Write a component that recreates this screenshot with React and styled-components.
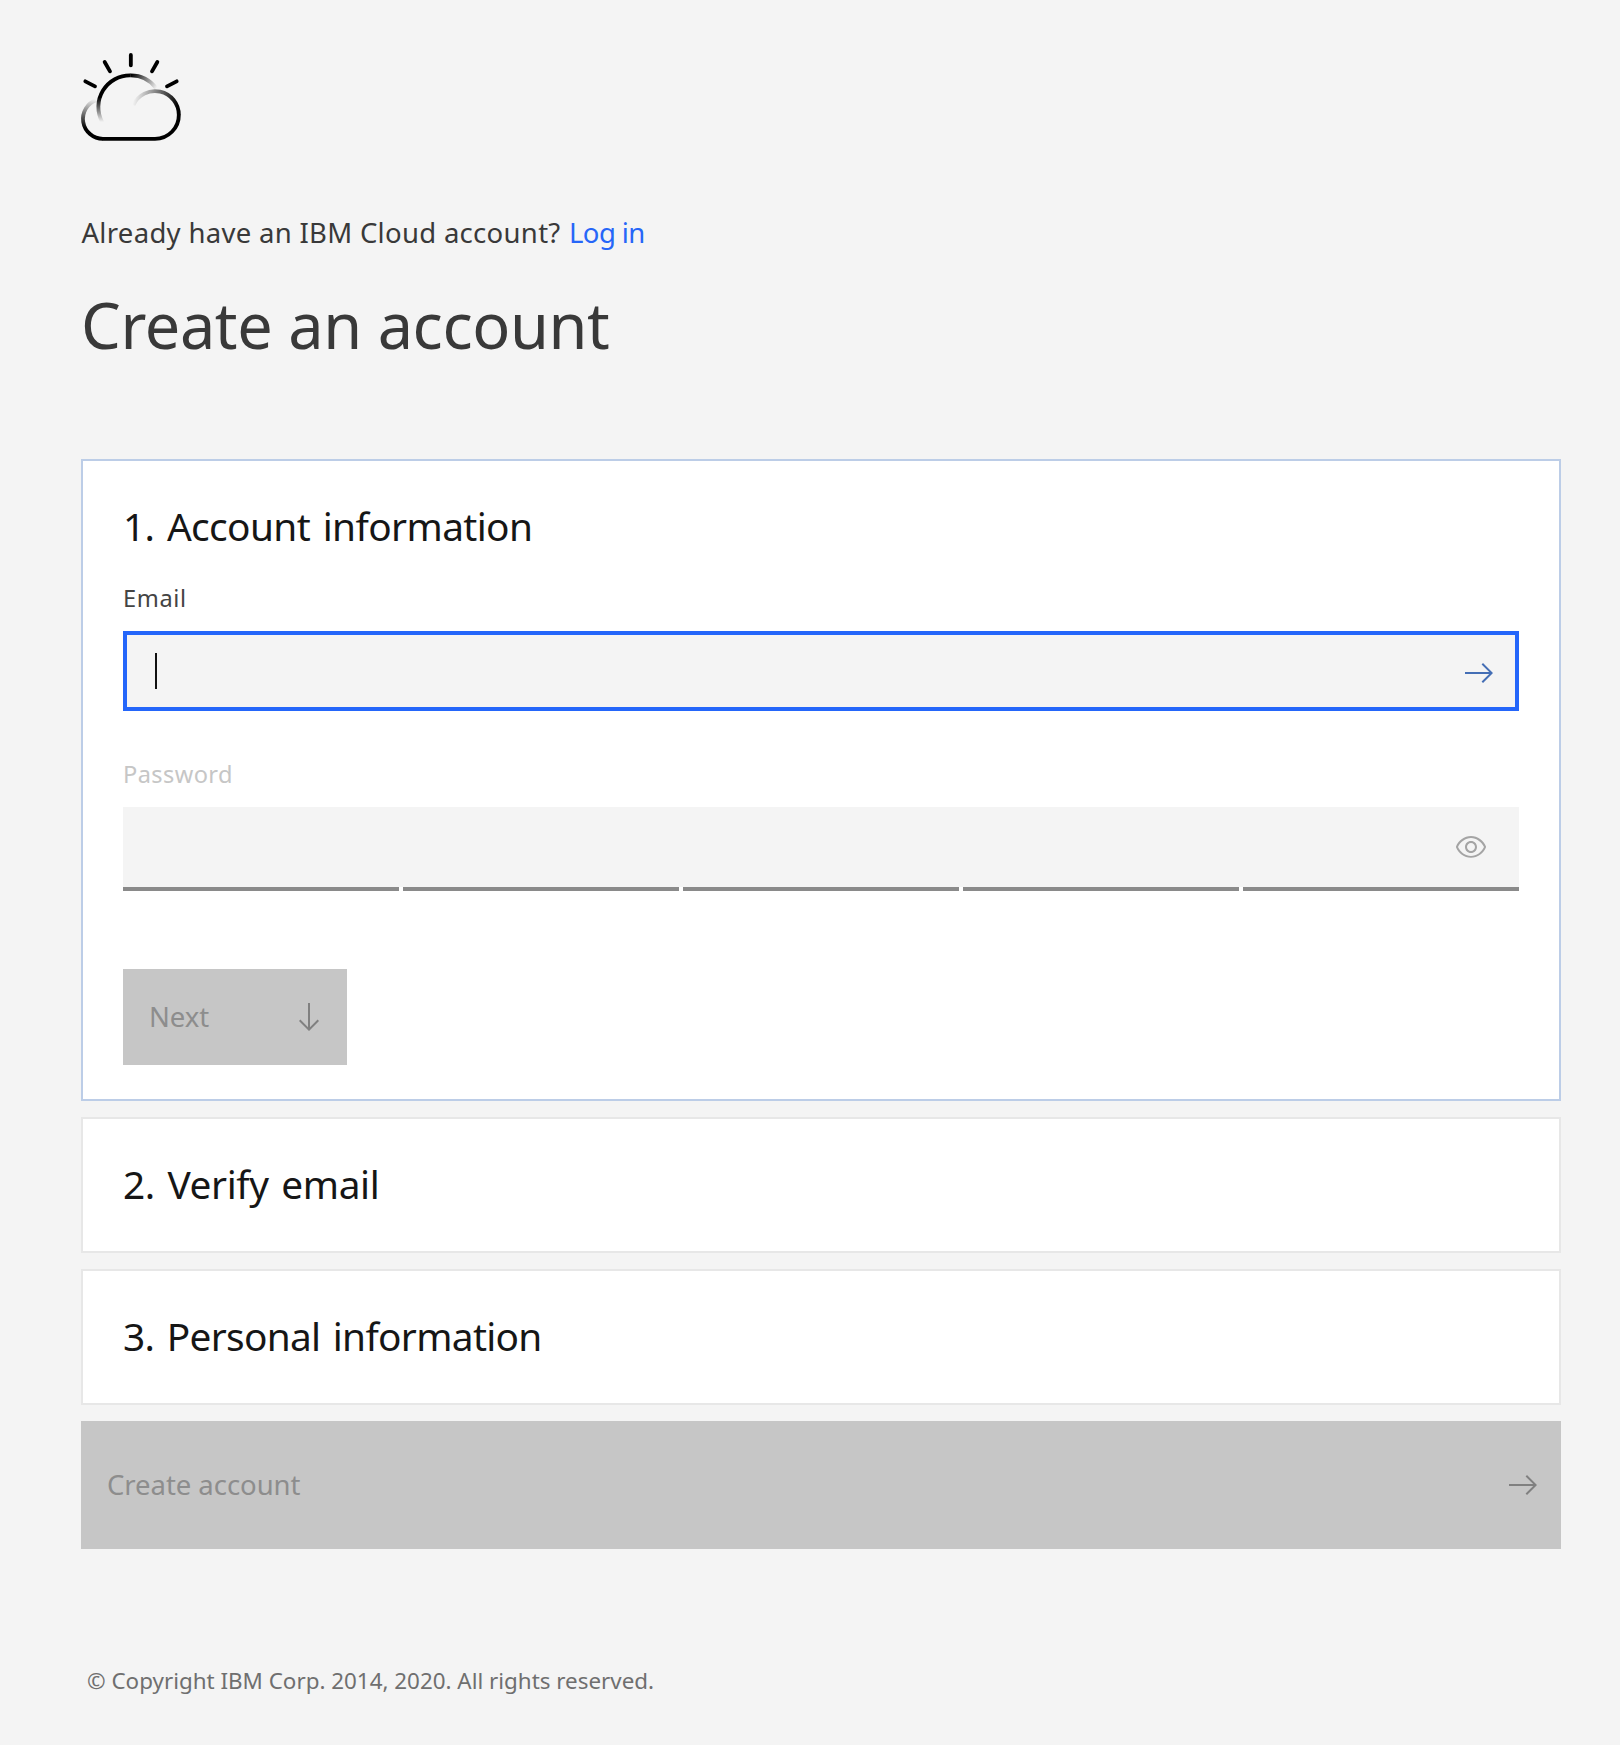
import React from "react";
import styled, { createGlobalStyle } from "styled-components";

const GlobalStyle = createGlobalStyle`
  *, *::before, *::after { box-sizing: border-box; }
  body {
    margin: 0;
    background: #f4f4f4;
    color: #161616;
    font-family: "Noto Sans", "Open Sans", sans-serif;
  }
`;

const Page = styled.main`
  width: 1620px;
  min-height: 1745px;
  padding: 52px 59px 48px 81px;
  display: flex;
  flex-direction: column;
  background: #f4f4f4;
`;

const Logo = styled.svg`
  display: block;
  flex: none;
  width: 100px;
  height: 90px;
  overflow: visible;
`;

const Intro = styled.p`
  margin: 73px 0 0 0.5px;
  font-size: 27.5px;
  line-height: 36px;
  letter-spacing: 0.3px;
  color: #393939;
`;

const LoginLink = styled.a`
  margin-left: 1px;
  color: #2666f8;
  letter-spacing: -0.6px;
  text-decoration: none;
`;

const Title = styled.h1`
  margin: 36px 0 0;
  font-size: 63px;
  font-weight: 400;
  line-height: 76px;
  letter-spacing: -0.41px;
  color: #393939;
`;

const Steps = styled.div`
  margin-top: 96px;
  display: flex;
  flex-direction: column;
  gap: 16px;
`;

const Card = styled.section`
  display: flex;
  flex-direction: column;
  align-items: stretch;
  min-height: 136px;
  padding: 39px 40px 34px;
  border: 2px solid ${(p) => (p.$active ? "#bccde7" : "#e7e7e7")};
  background: #fff;
`;

const StepHeading = styled.h2`
  margin: 0;
  font-size: 38.8px;
  font-weight: 400;
  line-height: 52px;
  word-spacing: 3px;
  letter-spacing: ${(p) => p.$tracking}px;
`;

const Label = styled.label`
  margin-top: ${(p) => p.$gap}px;
  margin-bottom: 17px;
  font-size: 23.6px;
  line-height: 32px;
  letter-spacing: ${(p) => p.$tracking}px;
  color: ${(p) => (p.$disabled ? "#c6c6c6" : "#444")};
`;

const Field = styled.div`
  height: 80px;
  display: flex;
  align-items: center;
  justify-content: ${(p) => (p.$focused ? "space-between" : "flex-end")};
  padding: ${(p) => (p.$focused ? "0 20px 0 28px" : "0 32px")};
  border: ${(p) => (p.$focused ? "4px solid #2466fa" : "0")};
  background: #f4f4f4;
`;

const Caret = styled.span`
  width: 2px;
  height: 36px;
  background: #111;
`;

const Icon = styled.svg`
  display: block;
  flex: none;
  width: 32px;
  height: 32px;
  margin-top: ${(p) => p.$drop || 0}px;
  fill: ${(p) => p.$color};
`;

const StrengthMeter = styled.div`
  display: grid;
  grid-template-columns: repeat(5, 1fr);
  gap: 4px;
`;

const StrengthBar = styled.span`
  height: 4px;
  background: #8a8a8a;
`;

const Button = styled.button`
  display: flex;
  align-items: center;
  justify-content: space-between;
  width: ${(p) => p.$width};
  height: ${(p) => p.$height}px;
  margin: ${(p) => p.$top}px 0 0;
  padding: 0 22px 0 26px;
  border: 0;
  background: #c6c6c6;
  color: #8d8d8d;
  font-family: inherit;
  font-size: 27.5px;
  line-height: 36px;
  letter-spacing: -0.05px;
`;

const Footer = styled.footer`
  margin: 116px 0 0 6px;
  font-size: 22.4px;
  line-height: 32px;
  color: #6f6f6f;
`;

function CloudLogo() {
  return (
    <Logo viewBox="33 36 300 270" fill="none" stroke="#000" strokeWidth="11.500" aria-label="Cloud">
      <defs>
        <linearGradient id="sunStart" gradientUnits="userSpaceOnUse" x1="0" y1="246" x2="0" y2="172">
          <stop offset="0" stopOpacity="0" />
          <stop offset="1" />
        </linearGradient>
        <linearGradient id="sunEnd" gradientUnits="userSpaceOnUse" x1="184" y1="105" x2="260" y2="144">
          <stop offset="0" />
          <stop offset="1" stopOpacity="0" />
        </linearGradient>
        <linearGradient id="cloudLeft" gradientUnits="userSpaceOnUse" x1="78" y1="178" x2="60" y2="268">
          <stop offset="0" stopOpacity="0" />
          <stop offset="1" />
        </linearGradient>
        <linearGradient id="cloudRight" gradientUnits="userSpaceOnUse" x1="188" y1="190" x2="320" y2="215">
          <stop offset="0" stopOpacity="0" />
          <stop offset="1" />
        </linearGradient>
      </defs>
      <g strokeLinecap="round">
        <path d="M182.500 45V76M104 66L120 94M262 66L246 94M46 124L75 139M320 124L291 139" />
      </g>
      <path d="M97 247A95 95 0 0 1 182.500 106" stroke="url(#sunStart)" />
      <path d="M182 106A95 95 0 0 1 259 145" stroke="url(#sunEnd)" />
      <path d="M80.200 179.500A60 60 0 0 0 99 296.500" stroke="url(#cloudLeft)" />
      <path d="M190 195A71.500 71.500 0 0 1 326.500 225" stroke="url(#cloudRight)" />
      <path d="M326.500 224A71.500 71.500 0 0 1 255 296.500H98" />
    </Logo>
  );
}

function ArrowRight({ color, drop }) {
  return (
    <Icon viewBox="0 0 16 16" $color={color} $drop={drop} aria-hidden="true">
      <path d="M9.300 3.700 13.100 7.500 1 7.500 1 8.500 13.100 8.500 9.300 12.300 10 13 15 8 10 3z" />
    </Icon>
  );
}

function ArrowDown({ color }) {
  return (
    <Icon viewBox="0 0 16 16" $color={color} aria-hidden="true">
      <path d="M12.300 9.300 8.500 13.100 8.500 1 7.500 1 7.500 13.100 3.700 9.300 3 10 8 15 13 10z" />
    </Icon>
  );
}

function Eye() {
  return (
    <Icon viewBox="0 0 16 16" $color="#a4a4a4" aria-hidden="true">
      <path
        fillRule="evenodd"
        d="M15.500 7.800C14.300 4.700 11.300 2.600 8 2.500 4.700 2.600 1.700 4.700.5 7.800c0 .1 0 .2 0 .3 1.200 3.100 4.100 5.200 7.500 5.300 3.300-.1 6.300-2.200 7.500-5.300 0 0 0-.2 0-.3zM8 12.500c-2.700 0-5.400-2-6.500-4.500 1-2.500 3.800-4.500 6.500-4.500s5.400 2 6.500 4.500c-1.100 2.500-3.800 4.500-6.500 4.500z"
      />
      <path
        fillRule="evenodd"
        d="M8 5C6.300 5 5 6.300 5 8s1.300 3 3 3 3-1.300 3-3-1.300-3-3-3zm0 5c-1.100 0-2-.9-2-2s.9-2 2-2 2 .9 2 2-.9 2-2 2z"
      />
    </Icon>
  );
}

export default function App() {
  return (
    <>
      <GlobalStyle />
      <Page>
        <CloudLogo />
        <Intro>
          Already have an IBM Cloud account? <LoginLink>Log in</LoginLink>
        </Intro>
        <Title>Create an account</Title>
        <Steps>
          <Card $active>
            <StepHeading $tracking={-0.6}>1. Account information</StepHeading>
            <Label $gap={30} $tracking={0.6}>Email</Label>
            <Field $focused>
              <Caret />
              <ArrowRight color="#446eb5" drop={4} />
            </Field>
            <Label $gap={47} $tracking={0.4} $disabled>Password</Label>
            <Field>
              <Eye />
            </Field>
            <StrengthMeter>
              {[1, 2, 3, 4, 5].map((level) => (
                <StrengthBar key={level} />
              ))}
            </StrengthMeter>
            <Button type="button" $width="224px" $height={96} $top={78}>
              Next
              <ArrowDown color="#808080" />
            </Button>
          </Card>
          <Card>
            <StepHeading $tracking={-0.4}>2. Verify email</StepHeading>
          </Card>
          <Card>
            <StepHeading $tracking={-0.68}>3. Personal information</StepHeading>
          </Card>
          <Button type="button" $width="100%" $height={128} $top={0}>
            Create account
            <ArrowRight color="#808080" />
          </Button>
        </Steps>
        <Footer>© Copyright IBM Corp. 2014, 2020. All rights reserved.</Footer>
      </Page>
    </>
  );
}
